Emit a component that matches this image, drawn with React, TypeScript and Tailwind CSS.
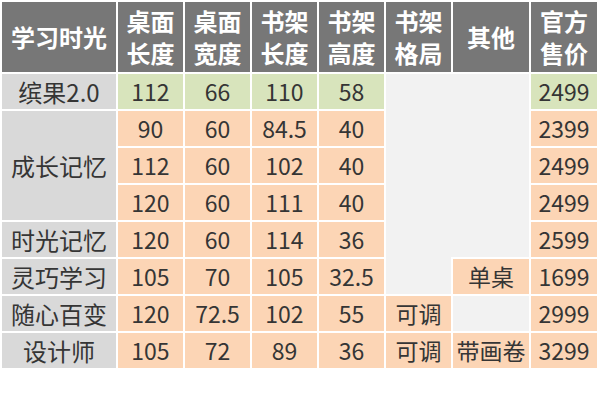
import React from "react";

const FONT = { fontFamily: '"Noto Sans CJK SC", "Noto Sans", sans-serif' };

const H = ({ children, col }: { children: React.ReactNode; col: string }) => (
  <div className={`${col} row-start-1 bg-[#777777] text-white font-bold text-[24px] leading-[32px] flex items-center justify-center text-center`}>
    {children}
  </div>
);

type Kind = "g" | "o" | "n";
const bg: Record<Kind, string> = {
  g: "bg-[#d8e4bc]",
  o: "bg-[#fcd5b5]",
  n: "bg-[#d9d9d9] text-[24px]",
};

const C = ({ v, k, cls = "" }: { v: string; k: Kind; cls?: string }) => (
  <div className={`${bg[k]} ${cls} flex items-center justify-center text-[23px] text-[#353535]`}>{v}</div>
);

export default function App() {
  return (
    <div className="w-[600px] h-[400px] bg-white p-[2px]" style={FONT}>
      <div className="grid grid-cols-[114px_65px_65px_65px_65px_65px_76px_66px] grid-rows-[70px_repeat(8,35px)] gap-[2px] bg-white">
        <H col="col-start-1">学习时光</H>
        <H col="col-start-2">桌面<br />长度</H>
        <H col="col-start-3">桌面<br />宽度</H>
        <H col="col-start-4">书架<br />长度</H>
        <H col="col-start-5">书架<br />高度</H>
        <H col="col-start-6">书架<br />格局</H>
        <H col="col-start-7">其他</H>
        <H col="col-start-8">官方<br />售价</H>

        <C v="缤果2.0" k="n" cls="col-start-1 row-start-2" />
        <C v="112" k="g" cls="col-start-2 row-start-2" />
        <C v="66" k="g" cls="col-start-3 row-start-2" />
        <C v="110" k="g" cls="col-start-4 row-start-2" />
        <C v="58" k="g" cls="col-start-5 row-start-2" />
        <div className="col-start-6 row-start-2 row-span-6 bg-[#f2f2f2]" />
        <div className="col-start-7 row-start-2 row-span-5 bg-[#f2f2f2] -ml-[2px]" />
        <C v="2499" k="g" cls="col-start-8 row-start-2" />

        <C v="成长记忆" k="n" cls="col-start-1 row-start-3 row-span-3" />
        <C v="90" k="o" cls="col-start-2 row-start-3" />
        <C v="60" k="o" cls="col-start-3 row-start-3" />
        <C v="84.5" k="o" cls="col-start-4 row-start-3" />
        <C v="40" k="o" cls="col-start-5 row-start-3" />
        <C v="2399" k="o" cls="col-start-8 row-start-3" />

        <C v="112" k="o" cls="col-start-2 row-start-4" />
        <C v="60" k="o" cls="col-start-3 row-start-4" />
        <C v="102" k="o" cls="col-start-4 row-start-4" />
        <C v="40" k="o" cls="col-start-5 row-start-4" />
        <C v="2499" k="o" cls="col-start-8 row-start-4" />

        <C v="120" k="o" cls="col-start-2 row-start-5" />
        <C v="60" k="o" cls="col-start-3 row-start-5" />
        <C v="111" k="o" cls="col-start-4 row-start-5" />
        <C v="40" k="o" cls="col-start-5 row-start-5" />
        <C v="2499" k="o" cls="col-start-8 row-start-5" />

        <C v="时光记忆" k="n" cls="col-start-1 row-start-6" />
        <C v="120" k="o" cls="col-start-2 row-start-6" />
        <C v="60" k="o" cls="col-start-3 row-start-6" />
        <C v="114" k="o" cls="col-start-4 row-start-6" />
        <C v="36" k="o" cls="col-start-5 row-start-6" />
        <C v="2599" k="o" cls="col-start-8 row-start-6" />

        <C v="灵巧学习" k="n" cls="col-start-1 row-start-7" />
        <C v="105" k="o" cls="col-start-2 row-start-7" />
        <C v="70" k="o" cls="col-start-3 row-start-7" />
        <C v="105" k="o" cls="col-start-4 row-start-7" />
        <C v="32.5" k="o" cls="col-start-5 row-start-7" />
        <C v="单桌" k="o" cls="col-start-7 row-start-7" />
        <C v="1699" k="o" cls="col-start-8 row-start-7" />

        <C v="随心百变" k="n" cls="col-start-1 row-start-8" />
        <C v="120" k="o" cls="col-start-2 row-start-8" />
        <C v="72.5" k="o" cls="col-start-3 row-start-8" />
        <C v="102" k="o" cls="col-start-4 row-start-8" />
        <C v="55" k="o" cls="col-start-5 row-start-8" />
        <C v="可调" k="o" cls="col-start-6 row-start-8" />
        <div className="col-start-7 row-start-8 bg-[#f2f2f2]" />
        <C v="2999" k="o" cls="col-start-8 row-start-8" />

        <C v="设计师" k="n" cls="col-start-1 row-start-9" />
        <C v="105" k="o" cls="col-start-2 row-start-9" />
        <C v="72" k="o" cls="col-start-3 row-start-9" />
        <C v="89" k="o" cls="col-start-4 row-start-9" />
        <C v="36" k="o" cls="col-start-5 row-start-9" />
        <C v="可调" k="o" cls="col-start-6 row-start-9" />
        <C v="带画卷" k="o" cls="col-start-7 row-start-9" />
        <C v="3299" k="o" cls="col-start-8 row-start-9" />
      </div>
    </div>
  );
}
